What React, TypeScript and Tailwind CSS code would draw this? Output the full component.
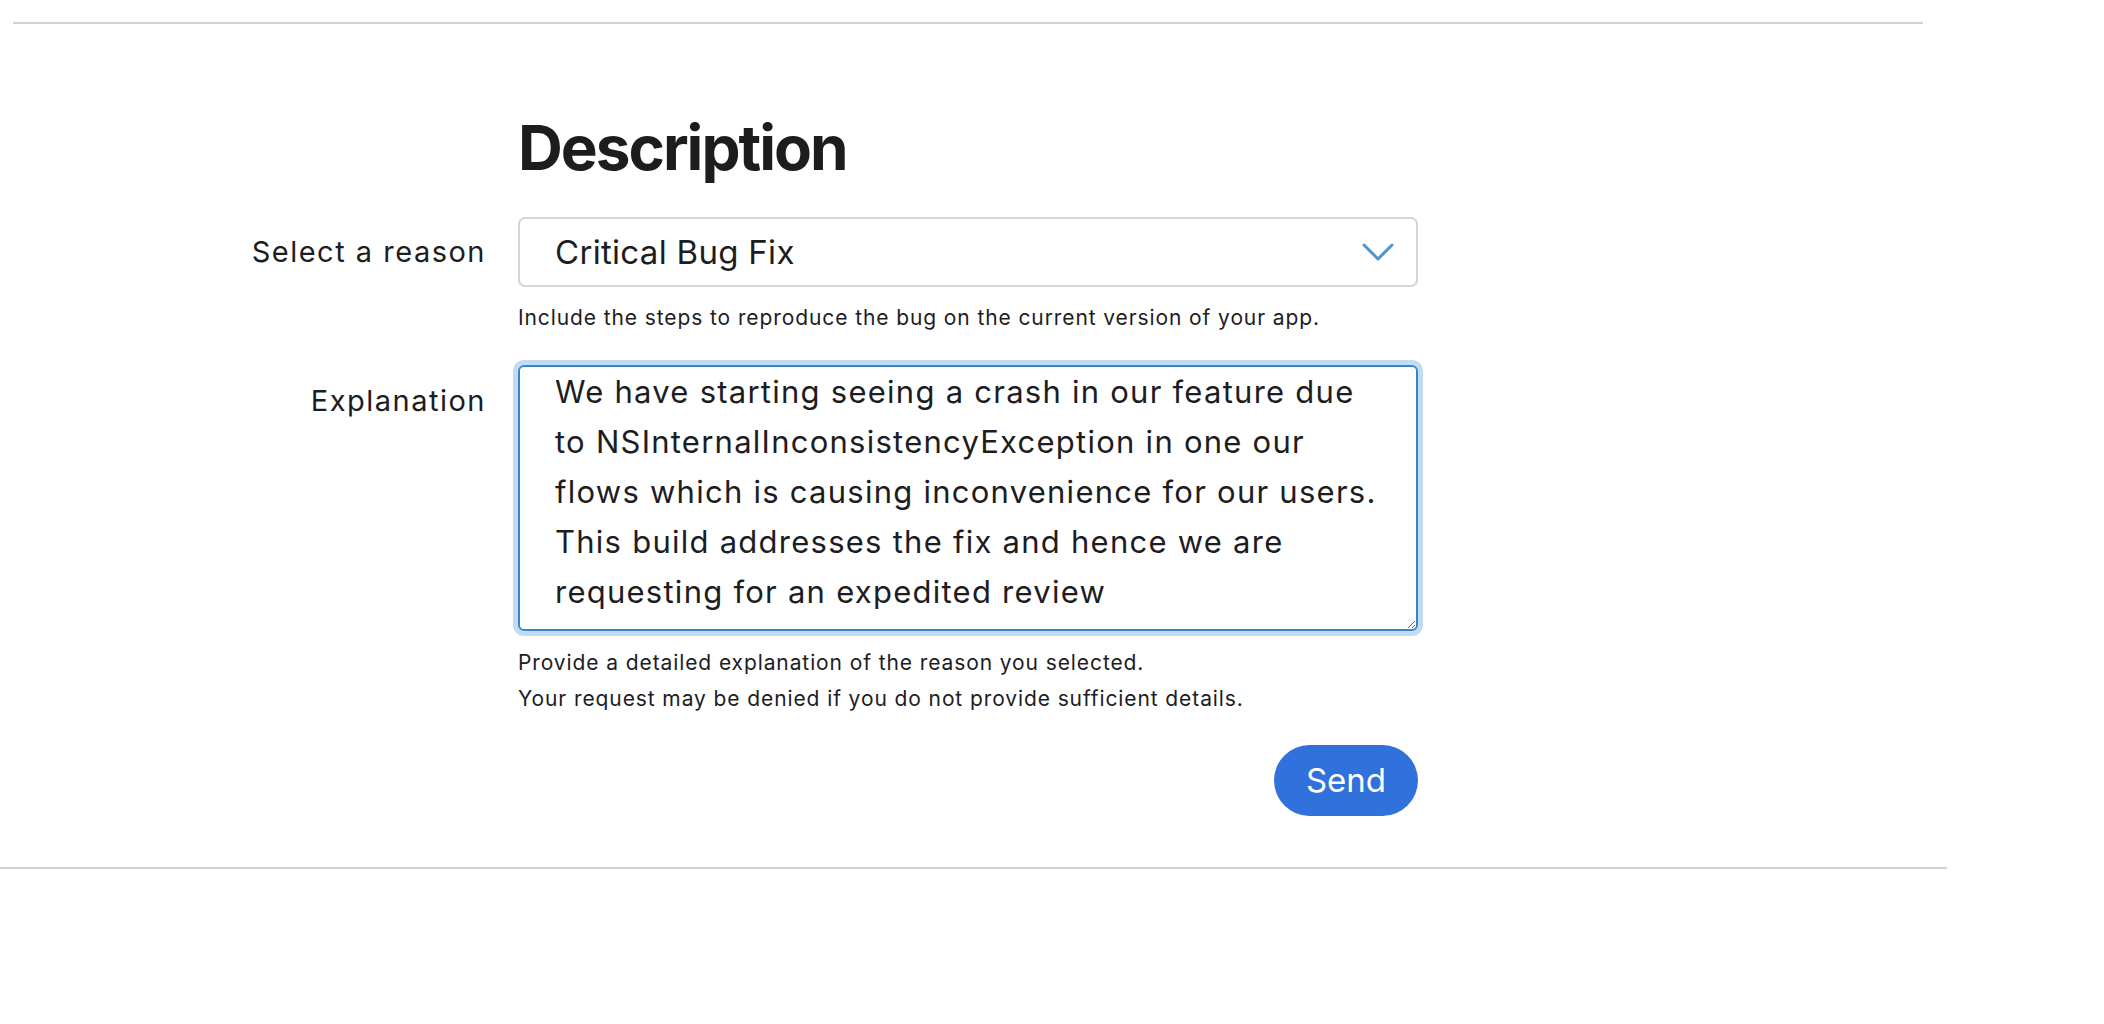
import React from "react";

const explanation = [
  "We have starting seeing a crash in our feature due",
  "to NSInternalInconsistencyException in one our",
  "flows which is causing inconvenience for our users.",
  "This build addresses the fix and hence we are",
  "requesting for an expedited review",
].join("\n");

function Row({
  label,
  children,
  className = "",
  labelClassName = "",
}: {
  label?: string;
  children: React.ReactNode;
  className?: string;
  labelClassName?: string;
}) {
  return (
    <div className={`flex gap-8 ${className}`}>
      <div
        className={`w-[486px] shrink-0 text-right text-[29px] leading-[36px] tracking-[1.5px] ${labelClassName}`}
      >
        {label}
      </div>
      <div className="w-[900px] shrink-0">{children}</div>
    </div>
  );
}

export default function App() {
  return (
    <div className="min-h-screen bg-white font-['Inter',sans-serif] text-[#1d1d1f] antialiased">
      <div className="pt-[22px] pl-[13px]">
        <div className="h-[2px] w-[1910px] bg-[#d2d2d7]" />
      </div>

      <div className="pt-[93px]">
        <Row>
          <h1 className="text-[62px] leading-[62px] font-bold tracking-[-2px] text-[#1d1d1f]">
            Description
          </h1>
        </Row>

        <Row label="Select a reason" className="mt-[38px] items-center">
          <div className="relative flex h-[70px] items-center rounded-[7px] border-2 border-[#d4d4d9] pl-[35px] pr-[22px]">
            <span className="flex-1 text-[33px] leading-[40px] tracking-[0.3px]">
              Critical Bug Fix
            </span>
            <svg
              width="32"
              height="19"
              viewBox="0 0 32 19"
              fill="none"
              stroke="#4b97d3"
              strokeWidth="3"
              strokeLinecap="round"
              strokeLinejoin="round"
            >
              <polyline points="2,2 16,16 30,2" />
            </svg>
          </div>
        </Row>

        <Row className="mt-[16px]">
          <p className="text-[21px] leading-[30px] tracking-[0.9px]">
            Include the steps to reproduce the bug on the current version of
            your app.
          </p>
        </Row>

        <Row label="Explanation" className="mt-[32px]" labelClassName="pt-[18px]">
          <textarea
            readOnly
            wrap="off"
            defaultValue={explanation}
            className="block h-[266px] w-full resize-y overflow-hidden rounded-[6px] border-2 border-[#3a84cc] px-[35px] pt-0 text-[31px] leading-[50px] tracking-[1.25px] text-[#1d1d1f] shadow-[0_0_0_5px_#c3dbf0] outline-none"
          />
        </Row>

        <Row className="mt-[14px]">
          <p className="text-[21px] leading-[36px] tracking-[0.9px]">
            Provide a detailed explanation of the reason you selected.
          </p>
          <p className="text-[21px] leading-[36px] tracking-[0.9px]">
            Your request may be denied if you do not provide sufficient details.
          </p>
        </Row>

        <Row className="mt-[28px]">
          <div className="flex justify-end">
            <button className="h-[71px] rounded-full bg-[#3071db] px-[32px] text-[33px] text-white">
              Send
            </button>
          </div>
        </Row>
      </div>

      <div className="mt-[51px] h-[2px] w-[1947px] bg-[#d2d2d7]" />
    </div>
  );
}
